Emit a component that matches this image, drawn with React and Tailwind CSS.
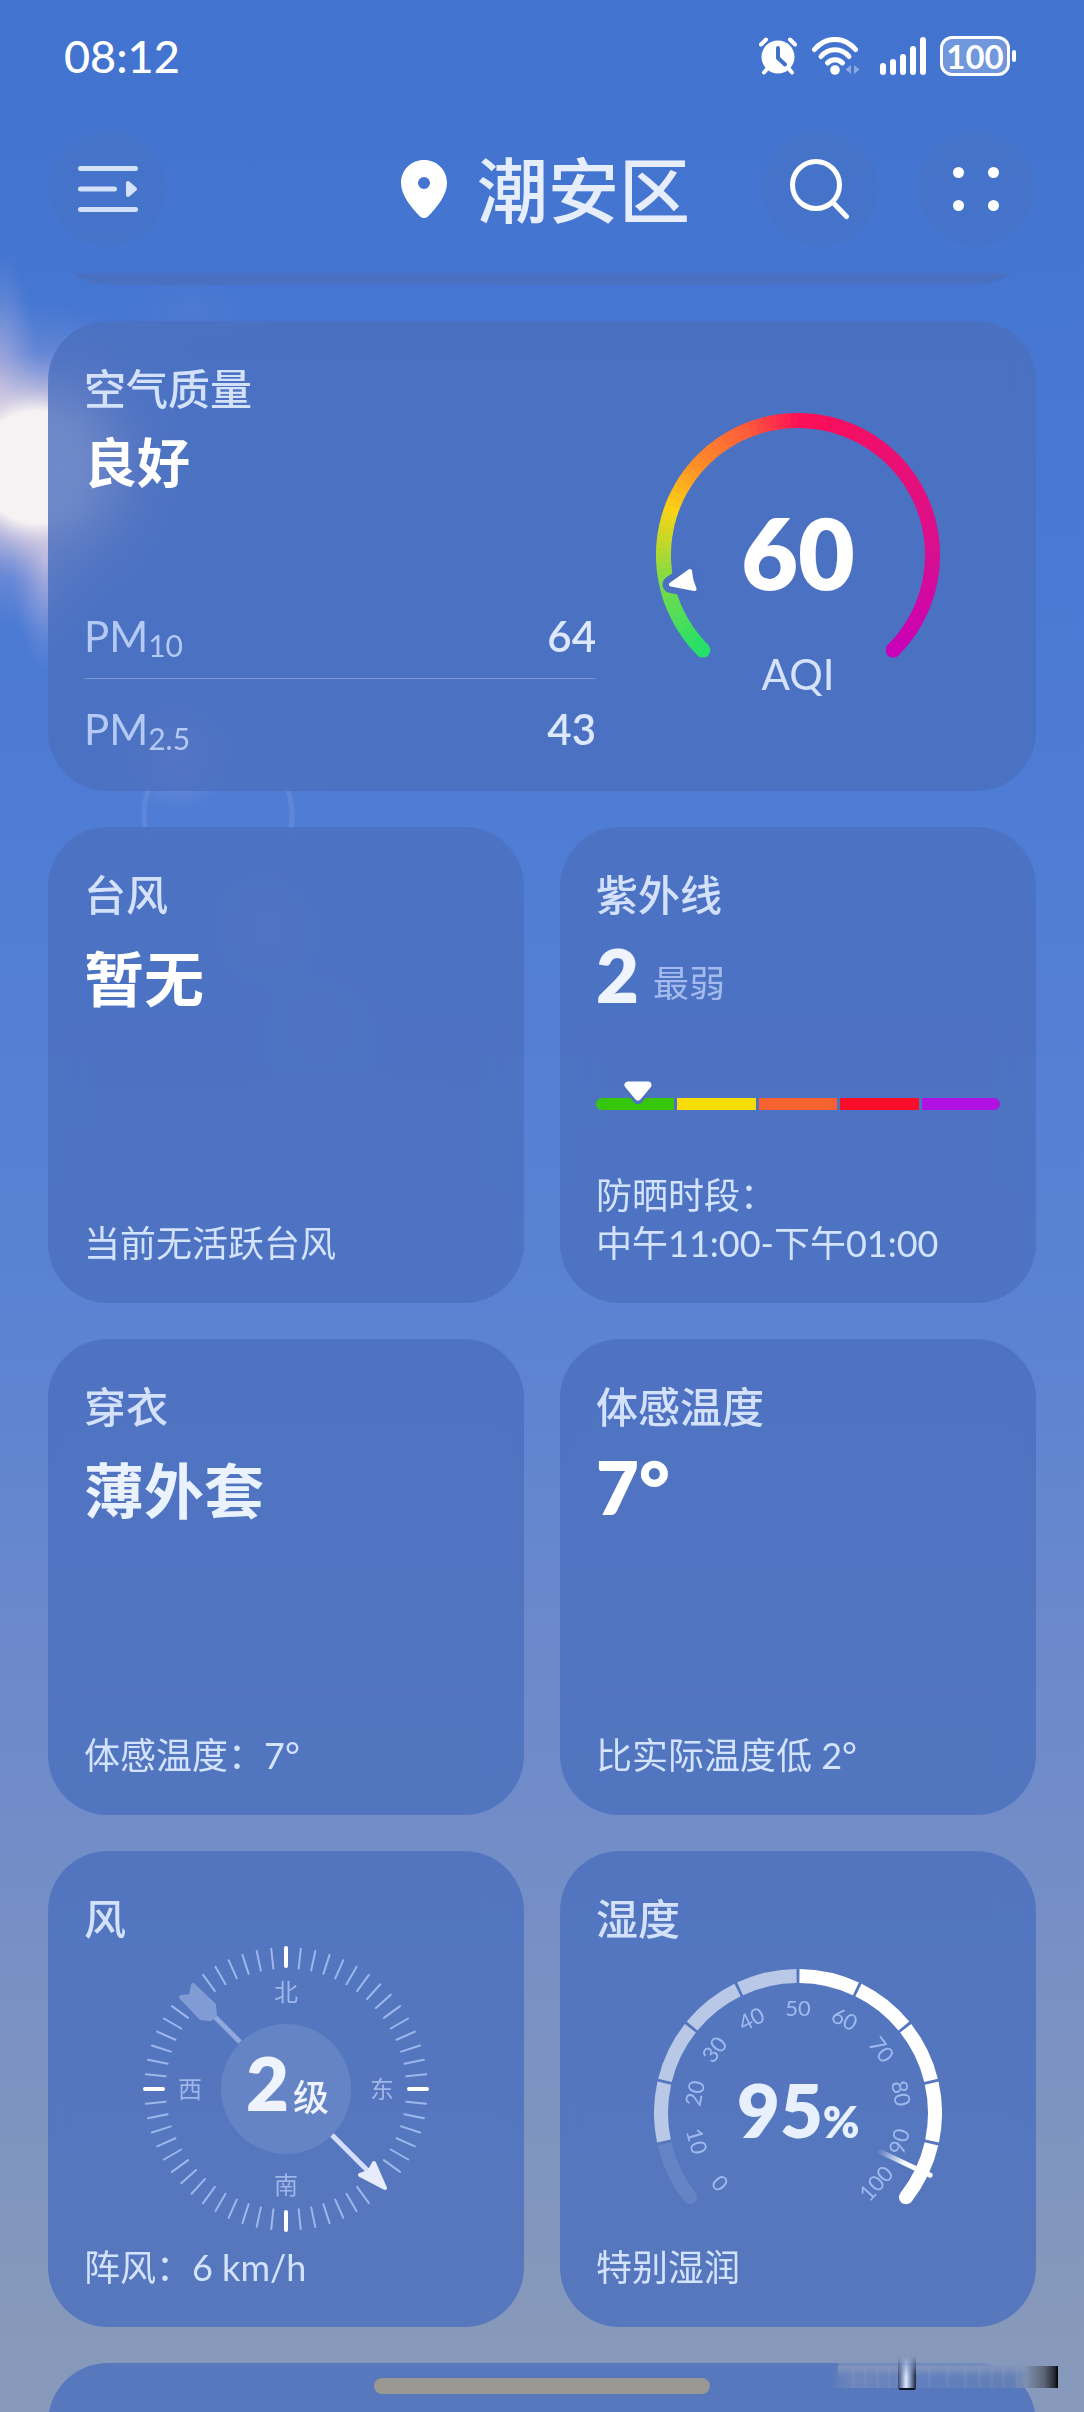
import React from 'react';

const polar = (cx, cy, r, deg) => {
  const rad = (deg * Math.PI) / 180;
  return [cx + r * Math.sin(rad), cy - r * Math.cos(rad)];
};

// angles are clockwise, 0 = straight up
const arc = (cx, cy, r, from, to) => {
  const [x1, y1] = polar(cx, cy, r, from);
  const [x2, y2] = polar(cx, cy, r, to);
  return `M${x1} ${y1}A${r} ${r} 0 ${to - from > 180 ? 1 : 0} 1 ${x2} ${y2}`;
};

const aqiStops = [
  [0, [34, 224, 106]],
  [0.12, [118, 219, 74]],
  [0.17, [176, 217, 48]],
  [0.24, [251, 211, 21]],
  [0.32, [252, 142, 42]],
  [0.42, [252, 90, 60]],
  [0.5, [253, 15, 85]],
  [0.83, [216, 15, 144]],
  [1, [200, 0, 184]],
];

const aqiColor = (t) => {
  const i = Math.max(1, aqiStops.findIndex(([pos]) => pos >= t));
  const [p0, c0] = aqiStops[i - 1];
  const [p1, c1] = aqiStops[i];
  const k = (t - p0) / (p1 - p0);
  return `rgb(${c0.map((v, n) => Math.round(v + (c1[n] - v) * k)).join(',')})`;
};

const SkyFlare = () => (
  <svg className="absolute inset-0 w-full h-full pointer-events-none" aria-hidden="true">
    <defs>
      <radialGradient id="sun">
        <stop offset="0" stopColor="#f6f1f2" />
        <stop offset="0.34" stopColor="#f6f1f2" />
        <stop offset="0.46" stopColor="#dccfe2" stopOpacity="0.75" />
        <stop offset="0.7" stopColor="#a9a8dc" stopOpacity="0.3" />
        <stop offset="1" stopColor="#8fa0dc" stopOpacity="0" />
      </radialGradient>
      <radialGradient id="ray">
        <stop offset="0" stopColor="#cfc4e0" stopOpacity="0.8" />
        <stop offset="1" stopColor="#8fa0dc" stopOpacity="0" />
      </radialGradient>
      <radialGradient id="blob">
        <stop offset="0" stopColor="#c8a8d8" stopOpacity="0.5" />
        <stop offset="1" stopColor="#8fa0dc" stopOpacity="0" />
      </radialGradient>
    </defs>
    <ellipse cx="0" cy="390" rx="40" ry="135" fill="url(#ray)" />
    <ellipse cx="46" cy="560" rx="34" ry="110" fill="url(#ray)" />
    <circle cx="36" cy="467" r="165" fill="url(#sun)" />
    <ellipse cx="190" cy="310" rx="60" ry="30" fill="url(#blob)" opacity="0.15" />
    <circle cx="178" cy="752" r="60" fill="url(#blob)" />
    <circle cx="218" cy="815" r="74" fill="none" stroke="#9fb0e6" strokeWidth="5" opacity="0.2" />
    <circle cx="268" cy="928" r="60" fill="url(#blob)" opacity="0.6" />
    <circle cx="320" cy="1024" r="50" fill="url(#blob)" opacity="0.45" />
    <circle cx="385" cy="1148" r="60" fill="url(#blob)" opacity="0.25" />
  </svg>
);

const StatusBar = () => (
  <div className="flex items-center justify-between h-28 pl-16 pr-17 text-white">
    <span className="text-[45px] leading-none font-medium">08:12</span>
    <div className="flex items-center">
      {/* alarm */}
      <svg className="w-[38px] h-[38px]" viewBox="0 0 38 38" fill="none" stroke="currentColor" strokeLinecap="round">
        <circle cx="19" cy="20" r="16.5" fill="currentColor" stroke="none" />
        <path d="M2 7.500 7 2.500M36 7.500 31 2.500M8 32 5 35.500M30 32 33 35.500" strokeWidth="4" />
        <path d="M19 11v10l7 6.500" stroke="#4170c9" strokeWidth="4" strokeLinejoin="round" />
      </svg>
      {/* wifi */}
      <svg className="w-12 h-[38px] ml-[15px]" viewBox="0 0 48 38" fill="none" stroke="currentColor" strokeLinecap="round">
        <path d="M2.500 12.500C14 -1 32 -1 43.500 12.500" strokeWidth="5" />
        <path d="M9 19.500C16.500 10.500 29.500 10.500 37 19.500" strokeWidth="5" />
        <path d="M15.500 26C19.500 21.500 26.500 21.500 30.500 26" strokeWidth="5" />
        <circle cx="23" cy="33" r="4.800" fill="currentColor" stroke="none" />
        <path d="M39 28v9l-5.500-4.500zM42 28v9l5.500-4.500z" fill="#8ea8e4" stroke="none" />
      </svg>
      {/* signal */}
      <svg className="w-[46px] h-[38px] ml-5" viewBox="0 0 46 38" fill="currentColor">
        <rect x="0" y="26" width="6" height="12" rx="3" />
        <rect x="10" y="22" width="6" height="16" rx="3" />
        <rect x="20" y="17" width="6" height="21" rx="3" />
        <rect x="30" y="9" width="6" height="29" rx="3" />
        <rect x="40" y="0" width="6" height="38" rx="3" />
      </svg>
      <div className="flex items-center ml-3.5">
        <span className="flex items-center justify-center w-[70px] h-10 border-3 border-white rounded-xl bg-white/25 text-[33px] leading-none font-bold">
          100
        </span>
        <span className="w-1 h-3 ml-0.5 rounded-full bg-white"></span>
      </div>
    </div>
  </div>
);

const RoundButton = ({ label, children }) => (
  <button
    type="button"
    aria-label={label}
    className="flex items-center justify-center size-29 rounded-full bg-[#4b6fbe]/30 text-white"
  >
    {children}
  </button>
);

const Header = () => (
  <header className="flex items-center px-[50px] pt-[19px] pb-[26px]">
    <RoundButton label="城市列表">
      <svg className="w-15 h-12" viewBox="0 0 60 48" fill="none" stroke="#d3e1fb" strokeWidth="5" strokeLinecap="round">
        <path d="M2.500 3.500h55M2.500 24h34M2.500 44.500h55" />
        <path d="M50 18v12l7-6z" fill="#d3e1fb" strokeWidth="4" strokeLinejoin="round" />
      </svg>
    </RoundButton>

    <div className="flex items-center gap-[30px] ml-auto mr-18">
      <svg className="w-[46px] h-[58px]" viewBox="0 0 46 58">
        <path
          d="M23 0C10 0 0 10 0 23c0 12 10 24 18.500 33 2.700 2.700 6.300 2.700 9 0C36 47 46 35 46 23 46 10 36 0 23 0zm0 17a6 6 0 1 1 0 12 6 6 0 0 1 0-12z"
          fill="#fff"
          fillRule="evenodd"
        />
      </svg>
      <h1 className="text-[71px] leading-none font-medium text-[#e6eefb]">潮安区</h1>
    </div>

    <div className="flex gap-10">
      <RoundButton label="搜索">
        <svg className="w-15 h-[62px]" viewBox="0 0 60 62" fill="none" stroke="currentColor" strokeWidth="5" strokeLinecap="round">
          <circle cx="26" cy="27" r="23.500" />
          <path d="M43 44.500 56.500 58.500" />
        </svg>
      </RoundButton>
      <RoundButton label="更多">
        <svg className="w-[46px] h-11" viewBox="0 0 46 44" fill="currentColor">
          <circle cx="5.500" cy="5.500" r="5.500" />
          <circle cx="40.500" cy="5.500" r="5.500" />
          <circle cx="5.500" cy="38.500" r="5.500" />
          <circle cx="40.500" cy="38.500" r="5.500" />
        </svg>
      </RoundButton>
    </div>
  </header>
);

const Card = ({ title, footer, className = 'aspect-square', children }) => (
  <section className={`flex flex-col p-9 rounded-[60px] bg-[#4b6fbe]/80 backdrop-blur-lg ${className}`}>
    <h2 className="text-[42px] leading-16 font-medium text-[#d3e1fb]">{title}</h2>
    {children}
    {footer && <p className="mt-auto text-[36px] leading-12 text-[#d3e3fc]">{footer}</p>}
  </section>
);

const AqiGauge = () => {
  const steps = Array.from({ length: 90 }, (_, i) => i);
  const [sx, sy] = polar(150, 150, 134.5, -135);
  const [ex, ey] = polar(150, 150, 134.5, 135);
  return (
    <svg className="w-75 h-75" viewBox="0 0 300 300">
      <circle cx={sx} cy={sy} r="7.500" fill={aqiColor(0)} />
      <circle cx={ex} cy={ey} r="7.500" fill={aqiColor(1)} />
      {steps.map((i) => (
        <path
          key={i}
          d={arc(150, 150, 134.5, -135 + i * 3, Math.min(135, -135 + i * 3 + 3.5))}
          fill="none"
          stroke={aqiColor((i + 0.5) / 90)}
          strokeWidth="15"
        />
      ))}
      <path
        d="M23 179.500 42.500 166 44 175.500 46.500 184.500z"
        fill="#4a70c2"
        stroke="#4a70c2"
        strokeWidth="17"
        strokeLinejoin="round"
      />
      <path d="M23 179.500 42 166 43.500 175.500 46.500 184z" fill="#fff" stroke="#fff" strokeWidth="4" strokeLinejoin="round" />
      <text x="150" y="185" textAnchor="middle" fontSize="98" fontWeight="800" fill="#fff">60</text>
      <text x="150" y="285" textAnchor="middle" fontSize="42" fill="#d5e2fa">AQI</text>
    </svg>
  );
};

const pollutants = [
  { sub: '10', value: 64 },
  { sub: '2.5', value: 43 },
];

const AirQualityCard = () => (
  <section className="flex shrink-0 h-[470px] p-9 rounded-[60px] bg-[#4b6fbe]/80 backdrop-blur-lg">
    <div className="flex flex-col flex-1">
      <h2 className="text-[42px] leading-16 font-medium text-[#d3e1fb]">空气质量</h2>
      <p className="text-[53px] leading-[84px] font-bold text-white">良好</p>
      <dl className="mt-auto -mb-4 divide-y divide-white/25">
        {pollutants.map((p) => (
          <div key={p.sub} className="flex items-center justify-between h-23 pt-2 text-[42px]">
            <dt className="text-[#b4c9f3]">
              PM<sub className="bottom-[-5px] text-[30px]">{p.sub}</sub>
            </dt>
            <dd className="font-semibold text-[#dde8fd]">{p.value}</dd>
          </div>
        ))}
      </dl>
    </div>
    <div className="flex justify-center w-[404px] pt-12">
      <AqiGauge />
    </div>
  </section>
);

const UvBar = () => (
  <div className="relative flex gap-[3px] h-3 mt-[79px]">
    <span className="flex-1 rounded-l-full bg-[#38c60d]"></span>
    <span className="flex-1 bg-[#f9dd09]"></span>
    <span className="flex-1 bg-[#f6622f]"></span>
    <span className="flex-1 bg-[#fb0d27]"></span>
    <span className="flex-1 rounded-r-full bg-[#ae11e0]"></span>
    <svg className="absolute left-[25px] -top-5 w-[34px] h-7" viewBox="0 0 34 28" strokeLinejoin="round">
      <path d="M7 7h20L17 20.500z" fill="#4c71c1" stroke="#4c71c1" strokeWidth="11" clipPath="inset(8px 0 0 0)" />
      <path d="M7 7h20L17 19z" fill="#fff" stroke="#fff" strokeWidth="7" />
    </svg>
  </div>
);

const Compass = () => {
  const ticks = Array.from({ length: 60 }, (_, i) => i * 6).filter((a) => ![132, 138, 312, 318].includes(a));
  return (
    <svg className="w-72 h-72 -mt-1.5 mx-auto" viewBox="-144 -144 288 288">
      {ticks.map((a) => {
        const major = a % 90 === 0;
        const [x1, y1] = polar(0, 0, major ? 123 : 121, a);
        const [x2, y2] = polar(0, 0, 141, a);
        return (
          <line
            key={a}
            x1={x1}
            y1={y1}
            x2={x2}
            y2={y2}
            stroke={major ? '#fff' : '#9db6ec'}
            strokeWidth={major ? 4 : 2}
            strokeLinecap="round"
          />
        );
      })}
      <circle r="65" fill="#6584c5" />

      {/* arrow tail */}
      <path d="M-72-73-46-47" stroke="#92a9de" strokeWidth="5" />
      <path
        d="M-105-92-95-93-93-104-72-84-71-73-76-70-85-71z"
        fill="#819cd5"
        stroke="#819cd5"
        strokeWidth="4"
        strokeLinejoin="round"
      />
      {/* arrow head */}
      <path d="M46 46 84 84" stroke="#d5defb" strokeWidth="5" />
      <path d="M99 99 74 86 83 83 88 74z" fill="#e6ecfb" stroke="#e6ecfb" strokeWidth="4" strokeLinejoin="round" />

      <g fontSize="24" fill="#9fb6e8" textAnchor="middle">
        <text x="0" y="-88">北</text>
        <text x="0" y="105">南</text>
        <text x="-96" y="9">西</text>
        <text x="96" y="9">东</text>
      </g>
      <text x="-40" y="22" fontSize="74" fontWeight="800" fill="#eef3fd">2</text>
      <text x="7" y="22" fontSize="36" fontWeight="500" fill="#eef3fd">级</text>
    </svg>
  );
};

const HumidityGauge = () => {
  const segments = Array.from({ length: 10 }, (_, i) => i);
  const segColor = (i) => (i === 0 ? '#6484c6' : i < 5 ? '#b9c8e6' : '#fff');
  const start = polar(0, 0, 137, -128);
  const end = polar(0, 0, 137, 128);
  const needleFrom = polar(0, 0, 91, 115.2);
  const needleTo = polar(0, 0, 146, 115.2);
  return (
    <svg className="w-72 h-60 mt-[18px] mx-auto" viewBox="-144 -144 288 240">
      <defs>
        <linearGradient
          id="needle"
          gradientUnits="userSpaceOnUse"
          x1={needleFrom[0]}
          y1={needleFrom[1]}
          x2={needleTo[0]}
          y2={needleTo[1]}
        >
          <stop offset="0" stopColor="#fff" stopOpacity="0.1" />
          <stop offset="0.5" stopColor="#fff" />
        </linearGradient>
      </defs>
      {segments.map((i) => (
        <path
          key={i}
          d={arc(0, 0, 137, -128 + i * 25.6 + (i ? 0.6 : 0), -128 + (i + 1) * 25.6 - (i < 9 ? 0.6 : 0))}
          fill="none"
          stroke={segColor(i)}
          strokeWidth="14"
        />
      ))}
      <path d={arc(start[0], start[1], 3.5, 52, 232)} fill="none" stroke={segColor(0)} strokeWidth="7" />
      <circle cx={end[0]} cy={end[1]} r="7" fill="#fff" />
      <line
        x1={needleFrom[0]}
        y1={needleFrom[1]}
        x2={needleTo[0]}
        y2={needleTo[1]}
        stroke="url(#needle)"
        strokeWidth="5"
        strokeLinecap="round"
      />
      {Array.from({ length: 11 }, (_, i) => {
        const a = (i - 5) * 26.4;
        const [x, y] = polar(0, 0, 105, a);
        const turn = a > 90 ? a - 180 : a < -90 ? a + 180 : a;
        return (
          <text
            key={i}
            x={x}
            y={y}
            dy="8"
            fontSize="22"
            fill="#9fb9ee"
            textAnchor="middle"
            transform={`rotate(${turn} ${x} ${y})`}
          >
            {i * 10}
          </text>
        );
      })}
      <text x="-61" y="25" fontSize="74" fontWeight="800" fill="#e8f0fd">
        95<tspan fontSize="44">%</tspan>
      </text>
    </svg>
  );
};

// smeared light streak in the bottom right corner
const Streak = () => (
  <svg className="absolute right-6 bottom-5 w-[230px] h-10" viewBox="0 0 230 40" aria-hidden="true">
    <defs>
      <linearGradient id="smear">
        <stop offset="0" stopColor="#7c8dbb" stopOpacity="0" />
        <stop offset="0.1" stopColor="#7488bb" stopOpacity="0.8" />
        <stop offset="0.45" stopColor="#5f7fbd" />
        <stop offset="0.8" stopColor="#647fb4" />
        <stop offset="0.86" stopColor="#7f90b0" />
        <stop offset="0.94" stopColor="#5b6475" />
        <stop offset="0.985" stopColor="#262a33" />
        <stop offset="1" stopColor="#000" />
      </linearGradient>
      <linearGradient id="haze" x1="0" y1="0" x2="0" y2="1">
        <stop offset="0" stopColor="#8496bc" stopOpacity="0" />
        <stop offset="0.5" stopColor="#8496bc" stopOpacity="0.9" />
        <stop offset="1" stopColor="#6c84bb" stopOpacity="0" />
      </linearGradient>
      <linearGradient id="glint">
        <stop offset="0" stopColor="#3a4a68" />
        <stop offset="0.3" stopColor="#9fb3d8" />
        <stop offset="0.45" stopColor="#dfe9fb" />
        <stop offset="0.7" stopColor="#7f93bb" />
        <stop offset="1" stopColor="#1a2336" />
      </linearGradient>
      <linearGradient id="glintFade" x1="0" y1="0" x2="0" y2="1">
        <stop offset="0" stopColor="#fff" stopOpacity="0" />
        <stop offset="0.6" stopColor="#fff" />
      </linearGradient>
      <mask id="glintMask">
        <rect x="68" y="4" width="18" height="34" fill="url(#glintFade)" />
      </mask>
    </defs>
    <rect x="0" y="14" width="228" height="22" fill="url(#smear)" />
    <rect x="8" y="4" width="188" height="24" fill="url(#haze)" />
    {[22, 34, 46, 58, 98, 116, 134, 148, 160, 172, 186].map((x) => (
      <rect key={x} x={x} y="14" width="3" height="22" fill="#8aa0cc" opacity="0.2" />
    ))}
    <rect x="68" y="4" width="18" height="34" rx="2" fill="url(#glint)" mask="url(#glintMask)" />
    <rect x="69" y="36" width="16" height="2" rx="1" fill="#0b1220" />
  </svg>
);

export default function App() {
  return (
    <div className="relative flex flex-col h-screen overflow-hidden bg-linear-[180deg,#4173cf_0%,#4576d1_12%,#4f7cd5_34%,#5b83d2_55%,#6a88cc_67%,#738dc7_77%,#8699bb_96%,#889abb_100%] font-[Lato,'Noto_Sans_CJK_SC',sans-serif]">
      <SkyFlare />

      <div className="relative">
        <StatusBar />
        <Header />
      </div>

      <main className="relative flex flex-col flex-1 min-h-0 gap-9 px-12 overflow-hidden">
        {/* card scrolled under the header */}
        <div className="shrink-0 h-40 -mt-37 rounded-[60px] bg-[#4b6fbe]/80"></div>

        <AirQualityCard />

        <div className="grid grid-cols-2 gap-9">
          <Card title="台风" footer="当前无活跃台风">
            <p className="mt-2 text-[60px] leading-22 font-bold text-white">暂无</p>
          </Card>

          <Card title="紫外线" footer={<>防晒时段：<br />中午11:00-下午01:00</>}>
            <p className="flex items-end gap-3.5 mt-1 text-[74px] leading-22 font-extrabold text-[#eef3fd]">
              2<span className="text-[36px] leading-18 font-normal text-[#a5bbed]">最弱</span>
            </p>
            <UvBar />
          </Card>

          <Card title="穿衣" footer="体感温度：7°">
            <p className="mt-2 text-[60px] leading-22 font-bold text-[#eaf2fe]">薄外套</p>
          </Card>

          <Card title="体感温度" footer="比实际温度低 2°">
            <p className="mt-1 text-[74px] leading-22 font-extrabold text-white">7°</p>
          </Card>

          <Card title="风" footer="阵风：6 km/h">
            <Compass />
          </Card>

          <Card title="湿度" footer="特别湿润">
            <HumidityGauge />
          </Card>
        </div>

        <div className="shrink-0 h-60 rounded-[60px] bg-[#4b6fbe]/80"></div>
      </main>

      <Streak />
      <div className="absolute bottom-[18px] left-1/2 -translate-x-1/2 w-84 h-4 rounded-full bg-[#999893]"></div>
    </div>
  );
}
